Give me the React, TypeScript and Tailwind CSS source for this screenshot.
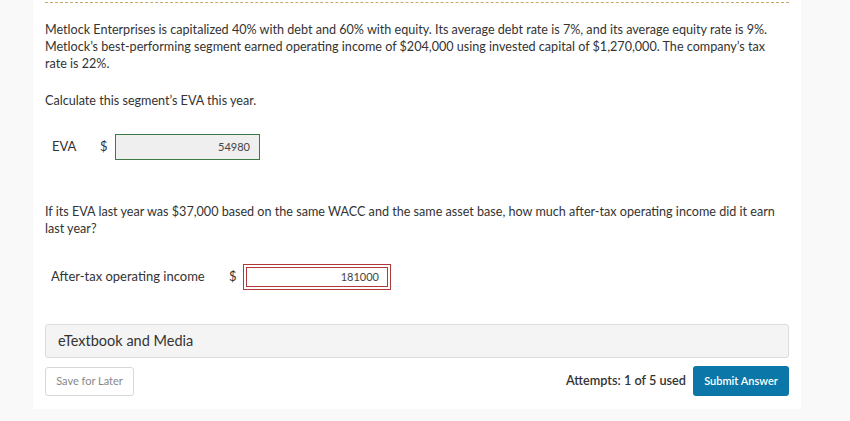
export default function App() {
  return (
    <div className="min-h-[421px] w-full bg-[#f9f9f9] font-['Lato','Noto_Sans',sans-serif] text-[#333]">
      <div className="ml-[33px] w-[768px] bg-white px-3 pb-[13px] pt-[2px]">
        <div className="border-t border-dashed border-[#c9a868]" />
        <p className="mt-[18px] text-[12.6px] leading-[17px]">
          Metlock Enterprises is capitalized 40% with debt and 60% with equity. Its average debt rate is 7%, and its
          average equity rate is 9%. Metlock’s best-performing segment earned operating income of $204,000 using
          invested capital of $1,270,000. The company’s tax rate is 22%.
        </p>
        <p className="mt-[20px] text-[12.6px] leading-[17px]">Calculate this segment’s EVA this year.</p>

        <div className="mt-[25px] flex items-center pl-[7px]">
          <span className="w-[48px] text-[13px]">EVA</span>
          <span className="w-[15px] text-[13px]">$</span>
          <div className="flex h-[26px] w-[145px] items-center justify-end border border-[#3d7a45] bg-[#efefef] pr-[9px] text-[11px] text-[#444]">
            54980
          </div>
        </div>

        <p className="mt-[43px] text-[12.6px] leading-[17px]">
          If its EVA last year was $37,000 based on the same WACC and the same asset base, how much after-tax operating
          income did it earn last year?
        </p>

        <div className="mt-[27px] flex items-center pl-[6px]">
          <span className="w-[178px] text-[13px]">After-tax operating income</span>
          <span className="w-[14px] text-[13px]">$</span>
          <div className="h-[26px] w-[148px] border border-[#b03a3a] p-[2px]">
            <div className="flex h-full items-center justify-end border border-[#b03a3a] pr-[8px] text-[11px] text-[#444]">
              181000
            </div>
          </div>
        </div>

        <div className="mt-[34px] flex h-[34px] items-center rounded-[3px] border border-[#dcdcdc] bg-[#f4f4f4] pl-[12px] text-[14.5px] text-[#333]">
          eTextbook and Media
        </div>

        <div className="mt-[8px] flex items-center justify-between">
          <button
            type="button"
            className="h-[29px] w-[89px] rounded-[3px] border border-[#d8d8d8] bg-white text-[11px] text-[#888]"
          >
            Save for Later
          </button>
          <div className="flex items-center gap-[7px]">
            <span className="text-[12.7px] font-semibold text-[#333]">Attempts: 1 of 5 used</span>
            <button
              type="button"
              className="h-[30px] w-[96px] rounded-[3px] bg-[#0a77a8] text-[11px] font-semibold text-white"
            >
              Submit Answer
            </button>
          </div>
        </div>
      </div>
    </div>
  )
}
